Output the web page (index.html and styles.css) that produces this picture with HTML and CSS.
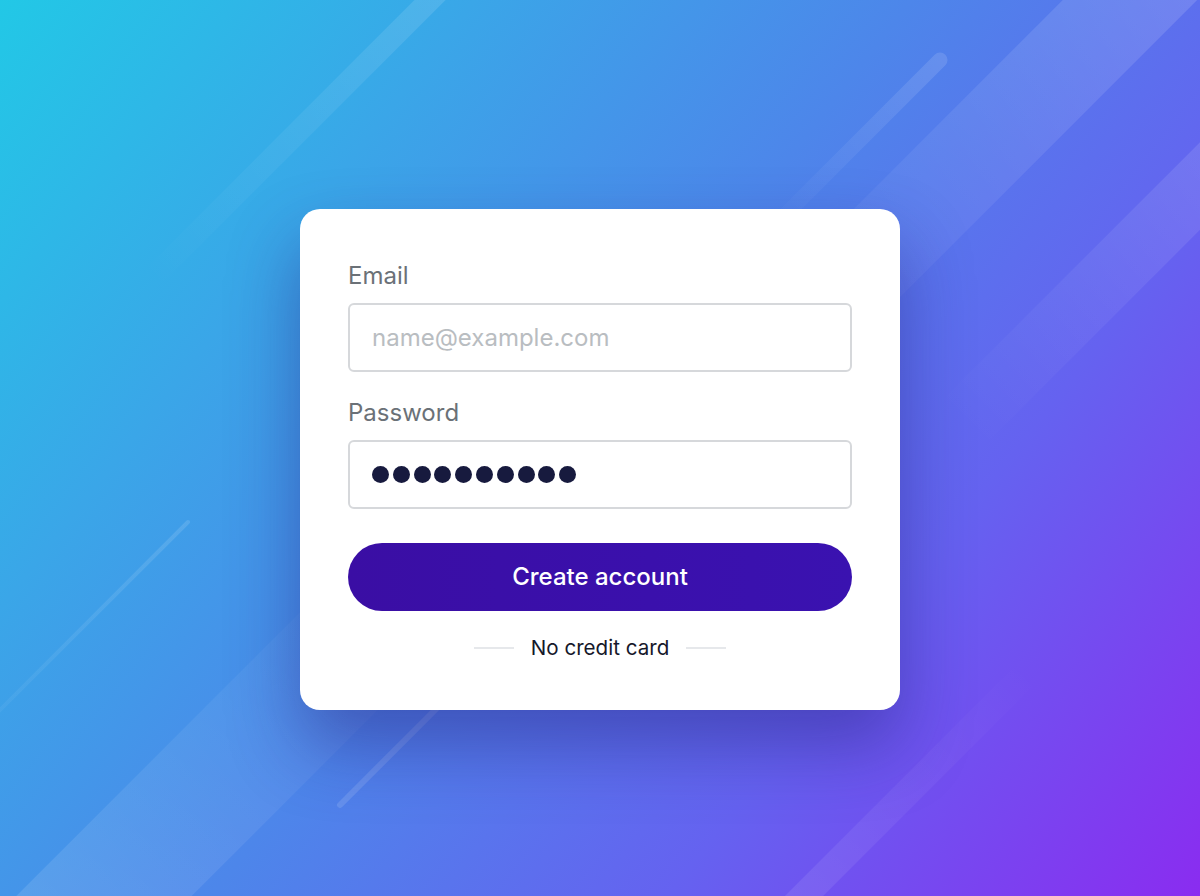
FILE: index.html
```html
<!DOCTYPE html>
<html lang="en">
<head>
<meta charset="utf-8">
<title>Create account</title>
<link rel="stylesheet" href="styles.css">
</head>
<body>
<svg class="stripes" width="1200" height="896" viewBox="0 0 1200 896" aria-hidden="true">
  <defs>
    <linearGradient id="g1" gradientUnits="userSpaceOnUse" x1="450" y1="-20" x2="150" y2="280">
      <stop offset="0" stop-color="#fff" stop-opacity="0.12"/>
      <stop offset="1" stop-color="#fff" stop-opacity="0"/>
    </linearGradient>
    <linearGradient id="g2" gradientUnits="userSpaceOnUse" x1="940" y1="60" x2="780" y2="220">
      <stop offset="0" stop-color="#fff" stop-opacity="0.12"/>
      <stop offset="1" stop-color="#fff" stop-opacity="0.01"/>
    </linearGradient>
    <linearGradient id="g3" gradientUnits="userSpaceOnUse" x1="1180" y1="-50" x2="760" y2="370">
      <stop offset="0" stop-color="#fff" stop-opacity="0.14"/>
      <stop offset="1" stop-color="#fff" stop-opacity="0"/>
    </linearGradient>
    <linearGradient id="g4" gradientUnits="userSpaceOnUse" x1="1250" y1="136" x2="960" y2="426">
      <stop offset="0" stop-color="#fff" stop-opacity="0.12"/>
      <stop offset="1" stop-color="#fff" stop-opacity="0"/>
    </linearGradient>
    <linearGradient id="g5" gradientUnits="userSpaceOnUse" x1="1030" y1="670" x2="770" y2="930">
      <stop offset="0" stop-color="#fff" stop-opacity="0"/>
      <stop offset="1" stop-color="#fff" stop-opacity="0.1"/>
    </linearGradient>
    <linearGradient id="g6" gradientUnits="userSpaceOnUse" x1="188" y1="522" x2="-10" y2="720">
      <stop offset="0" stop-color="#fff" stop-opacity="0.12"/>
      <stop offset="1" stop-color="#fff" stop-opacity="0.04"/>
    </linearGradient>
    <linearGradient id="g8" gradientUnits="userSpaceOnUse" x1="0" y1="1000" x2="440" y2="560">
      <stop offset="0" stop-color="#fff" stop-opacity="0.13"/>
      <stop offset="1" stop-color="#fff" stop-opacity="0"/>
    </linearGradient>
  </defs>
  <line x1="450" y1="-20" x2="150" y2="280" stroke="url(#g1)" stroke-width="22"/>
  <line x1="940" y1="60" x2="780" y2="220" stroke="url(#g2)" stroke-width="15" stroke-linecap="round"/>
  <line x1="1180" y1="-50" x2="760" y2="370" stroke="url(#g3)" stroke-width="95"/>
  <line x1="1250" y1="136" x2="960" y2="426" stroke="url(#g4)" stroke-width="62"/>
  <line x1="1030" y1="670" x2="770" y2="930" stroke="url(#g5)" stroke-width="27"/>
  <line x1="188" y1="522" x2="-10" y2="720" stroke="url(#g6)" stroke-width="4" stroke-linecap="round"/>
  <line x1="460" y1="685" x2="340" y2="805" stroke="#fff" stroke-opacity="0.12" stroke-width="6" stroke-linecap="round"/>
  <line x1="0" y1="1000" x2="440" y2="560" stroke="url(#g8)" stroke-width="124"/>
</svg>

<main class="stage">
  <form class="card">
    <label class="label" for="email">Email</label>
    <input class="field" id="email" type="email" placeholder="name@example.com">

    <label class="label label-pw" for="pw">Password</label>
    <div class="field field-pw" id="pw" role="textbox" aria-label="Password">
      <span class="dot"></span><span class="dot"></span><span class="dot"></span><span class="dot"></span><span class="dot"></span><span class="dot"></span><span class="dot"></span><span class="dot"></span><span class="dot"></span><span class="dot"></span>
    </div>

    <button class="btn" type="button">Create account</button>

    <div class="note">
      <span class="rule"></span>
      <span class="note-text">No credit card</span>
      <span class="rule"></span>
    </div>
  </form>
</main>
</body>
</html>
```

FILE: styles.css
```css
html, body {
  margin: 0;
  padding: 0;
}

body {
  width: 1200px;
  height: 896px;
  overflow: hidden;
  position: relative;
  font-family: Inter, "Noto Sans", "Liberation Sans", sans-serif;
  background: linear-gradient(128deg, #22c8e6 0%, #3aa6e8 25%, #4d86ea 48%, #6562f0 72%, #8a2cf0 100%);
}

.stripes {
  position: absolute;
  left: 0;
  top: 0;
}

.stage {
  position: relative;
  height: 896px;
  box-sizing: border-box;
  padding-top: 22px;
  display: flex;
  align-items: center;
  justify-content: center;
}

.card {
  width: 600px;
  box-sizing: border-box;
  background: #fff;
  border-radius: 20px;
  padding: 51px 48px 50px;
  display: flex;
  flex-direction: column;
  box-shadow: 0 36px 70px rgba(35, 25, 120, 0.42);
}

.label {
  font-size: 24px;
  line-height: 31px;
  color: #6b7177;
  margin-bottom: 12px;
}

.label-pw {
  margin-top: 25px;
}

.field {
  box-sizing: border-box;
  width: 504px;
  height: 69px;
  border: 2px solid #d6d8db;
  border-radius: 6px;
  padding: 0 22px;
  font-family: inherit;
  font-size: 24px;
  color: #1b1e3a;
  background: #fff;
  outline: none;
  margin: 0;
}

.field::placeholder {
  color: #b9bdc1;
}

.field-pw {
  display: flex;
  align-items: center;
  gap: 3.8px;
}

.dot {
  width: 17px;
  height: 17px;
  border-radius: 50%;
  background: #171a3e;
}

.btn {
  margin-top: 34px;
  height: 68px;
  border: 0;
  border-radius: 34px;
  background: linear-gradient(90deg, #3a0ea4 0%, #3a10ac 60%, #3a12b0 100%);
  color: #fff;
  font-family: inherit;
  font-size: 24px;
  font-weight: 500;
  cursor: pointer;
}

.note {
  margin-top: 25px;
  display: flex;
  align-items: center;
  justify-content: center;
  gap: 17px;
}

.rule {
  width: 40px;
  height: 2px;
  background: #e6e8eb;
}

.note-text {
  font-size: 20.6px;
  line-height: 24px;
  color: #16182a;
}
```
